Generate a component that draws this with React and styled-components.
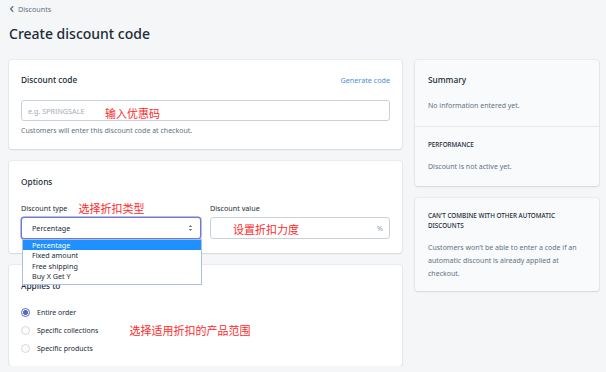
import React from 'react'
import styled, { createGlobalStyle } from 'styled-components'

const Global = createGlobalStyle`
  body {
    margin: 0;
    background: #f4f6f8;
    font-family: 'Noto Sans', 'Noto Sans CJK SC', sans-serif;
    color: #212b36;
  }
`

const Page = styled.div`
  padding: 3px 7px 0 9px;
`

const Crumb = styled.div`
  display: flex;
  align-items: center;
  gap: 3px;
  font-size: 7.2px;
  color: #637381;
  height: 12px;
`

const Title = styled.h1`
  margin: 8px 0 15px;
  font-size: 14px;
  font-weight: 500;
  color: #212b36;
  line-height: 22px;
`

const Layout = styled.div`
  display: grid;
  grid-template-columns: 393px 184px;
  gap: 13px;
  align-items: start;
`

const Column = styled.div`
  display: flex;
  flex-direction: column;
  gap: 12px;
`

const Card = styled.section`
  position: relative;
  background: ${p => (p.$muted ? '#f9fafb' : '#fff')};
  border-radius: 3px;
  box-shadow: 0 0 0 1px rgba(63, 63, 68, 0.05), 0 1px 2px rgba(63, 63, 68, 0.12);
`

const Section = styled.div`
  padding: ${p => p.$pad || '14px 12px 12px'};
  & + & {
    border-top: 1px solid #e6e9ec;
  }
`

const CardHead = styled.div`
  display: flex;
  justify-content: space-between;
  align-items: center;
  margin-bottom: ${p => p.$gap || 14}px;
`

const Heading = styled.h2`
  margin: 0;
  font-size: 8.3px;
  font-weight: 500;
  color: #212b36;
  line-height: 12px;
`

const Link = styled.a`
  font-size: 7.2px;
  color: #4a8fd8;
  text-decoration: none;
`

const Field = styled.div`
  display: flex;
  align-items: center;
  height: ${p => p.$h || 21}px;
  border: 1px solid ${p => (p.$focus ? '#6f7bd0' : '#c9d1d8')};
  border-radius: 3px;
  background: #fff;
  padding: 0 ${p => p.$pr || 6}px 0 ${p => p.$pl || 6}px;
  box-sizing: border-box;
  font-size: 7.2px;
  box-shadow: ${p => (p.$focus ? '0 0 0 0.5px #6f7bd0' : 'none')};
`

const Placeholder = styled.span`
  color: #a5adb5;
  width: 77px;
`

const Note = styled.span`
  color: #ff2a2a;
  font-size: ${p => p.$size || 11}px;
  line-height: 1;
  margin-left: ${p => p.$ml || 0}px;
  margin-top: ${p => p.$mt || 0}px;
`

const Help = styled.p`
  margin: 4px 0 0;
  font-size: 7px;
  color: #637381;
  line-height: 11px;
`

const Row = styled.div`
  display: grid;
  grid-template-columns: 1fr 1fr;
  gap: 9px;
`

const Label = styled.div`
  display: flex;
  align-items: center;
  height: 12px;
  margin-bottom: 3px;
  font-size: 7.2px;
  color: #212b36;
`

const SelectWrap = styled.div`
  position: relative;
`

const Value = styled.span`
  flex: 1;
  color: #212b36;
`

const Unit = styled.span`
  color: #919eab;
  margin-left: auto;
`

const Menu = styled.ul`
  position: absolute;
  top: 22px;
  left: 1px;
  width: 178px;
  margin: 0;
  padding: 0 0 2px;
  list-style: none;
  background: #fff;
  border: 1px solid #a9bde6;
  z-index: 5;
  font-size: 7.2px;
`

const Item = styled.li`
  height: 10.4px;
  line-height: 10.4px;
  padding-left: 9px;
  color: ${p => (p.$active ? '#fff' : '#212b36')};
  background: ${p => (p.$active ? '#1e90ff' : 'transparent')};
`

const Radios = styled.div`
  display: flex;
  flex-direction: column;
  gap: 6px;
`

const Radio = styled.label`
  display: flex;
  align-items: center;
  height: 12px;
  font-size: 7px;
  color: #212b36;
`

const Dot = styled.span`
  width: 9px;
  height: 9px;
  border-radius: 50%;
  box-sizing: border-box;
  border: 1px solid ${p => (p.$on ? '#5c6ac4' : '#d3d9de')};
  background: ${p => (p.$on ? 'radial-gradient(circle, #5c6ac4 0 2.2px, #fff 2.6px)' : '#fbfcfc')};
  margin-right: 7px;
  flex: none;
`

const Sub = styled.p`
  margin: 0;
  font-size: 7px;
  color: #637381;
  line-height: 13px;
`

const Caps = styled.h3`
  margin: 0 0 ${p => p.$gap || 10}px;
  font-size: 6.3px;
  font-weight: 500;
  color: #212b36;
  line-height: 10px;
  text-transform: uppercase;
`

const Arrows = () => (
  <svg width="5" height="8" viewBox="0 0 5 8">
    <path d="M2.5 1 L4.2 3 H0.8 Z M2.5 7 L4.2 5 H0.8 Z" fill="#637381" />
  </svg>
)

const Chevron = () => (
  <svg width="6" height="8" viewBox="0 0 6 8">
    <path d="M4.2 1.2 L1.6 4 L4.2 6.8" stroke="#637381" strokeWidth="1.3" fill="none" />
  </svg>
)

export default function App() {
  return (
    <Page>
      <Global />
      <Crumb><Chevron />Discounts</Crumb>
      <Title>Create discount code</Title>
      <Layout>
        <Column>
          <Card>
            <Section $pad="14px 12px 13px">
              <CardHead $gap={14}>
                <Heading>Discount code</Heading>
                <Link href="#">Generate code</Link>
              </CardHead>
              <Field>
                <Placeholder>e.g. SPRINGSALE</Placeholder>
                <Note $ml={0} $mt={6}>输入优惠码</Note>
              </Field>
              <Help>Customers will enter this discount code at checkout.</Help>
            </Section>
          </Card>

          <Card>
            <Section $pad="15px 12px 14px">
              <CardHead $gap={14}>
                <Heading>Options</Heading>
              </CardHead>
              <Row>
                <div>
                  <Label>
                    Discount type
                    <Note $ml={11}>选择折扣类型</Note>
                  </Label>
                  <SelectWrap>
                    <Field $focus $h={22} $pl={10} $pr={7}>
                      <Value>Percentage</Value>
                      <Arrows />
                    </Field>
                    <Menu>
                      <Item $active>Percentage</Item>
                      <Item>Fixed amount</Item>
                      <Item>Free shipping</Item>
                      <Item>Buy X Get Y</Item>
                    </Menu>
                  </SelectWrap>
                </div>
                <div>
                  <Label>Discount value</Label>
                  <Field $h={22} $pl={22} $pr={6}>
                    <Note $mt={2}>设置折扣力度</Note>
                    <Unit>%</Unit>
                  </Field>
                </div>
              </Row>
            </Section>
          </Card>

          <Card>
            <Section $pad="15px 12px 12px">
              <CardHead $gap={14}>
                <Heading>Applies to</Heading>
              </CardHead>
              <Radios>
                <Radio><Dot $on />Entire order</Radio>
                <Radio>
                  <Dot />Specific collections
                  <Note $ml={31}>选择适用折扣的产品范围</Note>
                </Radio>
                <Radio><Dot />Specific products</Radio>
              </Radios>
            </Section>
          </Card>
        </Column>

        <Column>
          <Card $muted>
            <Section $pad="14px 13px 14px">
              <CardHead $gap={13}>
                <Heading>Summary</Heading>
              </CardHead>
              <Sub>No information entered yet.</Sub>
            </Section>
            <Section $pad="13px 13px 13px">
              <Caps $gap={10}>Performance</Caps>
              <Sub>Discount is not active yet.</Sub>
            </Section>
          </Card>
          <Card $muted>
            <Section $pad="13px 13px 11px">
              <Caps $gap={10}>Can’t combine with other automatic discounts</Caps>
              <Sub>Customers won’t be able to enter a code if an automatic discount is already applied at checkout.</Sub>
            </Section>
          </Card>
        </Column>
      </Layout>
    </Page>
  )
}
